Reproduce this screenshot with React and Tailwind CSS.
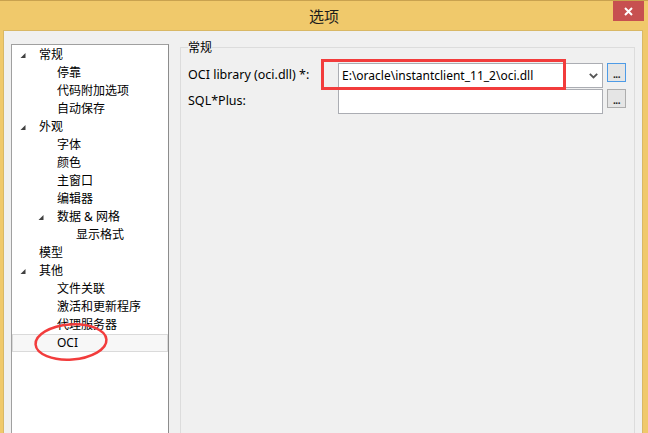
import React from "react";

const rows = [
  { t: "常规", l: 0, exp: true },
  { t: "停靠", l: 1 },
  { t: "代码附加选项", l: 1 },
  { t: "自动保存", l: 1 },
  { t: "外观", l: 0, exp: true },
  { t: "字体", l: 1 },
  { t: "颜色", l: 1 },
  { t: "主窗口", l: 1 },
  { t: "编辑器", l: 1 },
  { t: "数据 & 网格", l: 1, exp: true },
  { t: "显示格式", l: 2 },
  { t: "模型", l: 0 },
  { t: "其他", l: 0, exp: true },
  { t: "文件关联", l: 1 },
  { t: "激活和更新程序", l: 1 },
  { t: "代理服务器", l: 1 },
  { t: "OCI", l: 1, sel: true },
];

const padByLevel = ["pl-[8px]", "pl-[26px]", "pl-[45px]"];

function Tri() {
  return (
    <svg width="19" height="18" viewBox="0 0 19 18" className="shrink-0">
      <polygon points="5.5,8 5.5,13 0.5,13" transform="translate(0,-1)" fill="#404040" />
    </svg>
  );
}

function TreeRow({ r }) {
  return (
    <div
      className={
        "h-[18px] flex items-center whitespace-nowrap " +
        padByLevel[r.l] +
        (r.sel ? " bg-[#f7f7f7] outline outline-1 outline-[#dadada] -outline-offset-1" : "")
      }
    >
      {r.exp ? <Tri /> : <div className="w-[19px] shrink-0" />}
      <span className="text-[12px] leading-[18px] text-black">{r.t}</span>
    </div>
  );
}

function DotsButton({ focused }) {
  return (
    <div
      className={
        "ml-[4px] w-[19px] h-[19px] shrink-0 bg-[#e5e5e5] flex items-end justify-center pb-[4px] border " +
        (focused ? "border-[#4e9be6]" : "border-[#adadad]")
      }
    >
      <span className="text-[10px] leading-[6px] tracking-[-0.5px] text-[#222] font-bold">...</span>
    </div>
  );
}

export default function App() {
  return (
    <div
      className="w-[648px] h-[433px] overflow-hidden bg-[#f0c96b] flex flex-col relative border-t border-[#c9a24f]"
      style={{ fontFamily: '"Noto Sans", "Noto Sans CJK SC", sans-serif' }}
    >
      {/* title bar */}
      <div className="h-[29px] shrink-0 flex items-center justify-center relative">
        <span
          className="text-[15px] text-[#1b1b1b] leading-none"
          style={{ fontFamily: '"Noto Sans CJK SC", sans-serif' }}
        >
          选项
        </span>
        <div className="absolute right-[4px] top-0 w-[31px] h-[20px] bg-[#c75050] flex items-center justify-center">
          <svg width="9" height="9" viewBox="0 0 9 9">
            <path d="M1 1 L8 8 M8 1 L1 8" stroke="#fff" strokeWidth="2" />
          </svg>
        </div>
      </div>

      {/* content */}
      <div className="flex-1 ml-[3px] mr-[5px] border border-[#d9b865] bg-[#f0f0f0] flex items-start pl-[7px] pr-[7px] pt-[8px] gap-[11px]">
        {/* tree */}
        <div className="mt-[5px] pt-[1px] w-[158px] h-[420px] shrink-0 bg-white border border-[#a0a0a0] border-r-[#8c8c8c]">
          {rows.map((r, i) => (
            <TreeRow key={i} r={r} />
          ))}
        </div>

        {/* group box */}
        <fieldset className="flex-1 min-w-0 h-[420px] border border-[#dcdcdc] px-[7px] m-0">
          <legend className="text-[12px] leading-[17px] px-0 text-black">常规</legend>
          <div className="mt-[7px] flex items-start">
            <div className="w-[150px] shrink-0 h-[25px] flex items-center text-[12.5px] text-black whitespace-nowrap">
              OCI library (oci.dll) *:
            </div>
            <div className="w-[265px] h-[25px] shrink-0 border border-[#abadb3] bg-white flex items-center pl-[3px]">
              <span className="text-[12px] text-black whitespace-nowrap">
                {"E:\\oracle\\instantclient_11_2\\oci.dll"}
              </span>
              <svg width="9" height="6" viewBox="0 0 9 6" className="ml-auto mr-[4px]">
                <path d="M0.8 0.8 L4.5 4.5 L8.2 0.8" stroke="#555" strokeWidth="1.8" fill="none" />
              </svg>
            </div>
            <DotsButton focused />
          </div>
          <div className="mt-[1px] flex items-start">
            <div className="w-[150px] shrink-0 h-[25px] flex items-center text-[12.5px] text-black whitespace-nowrap">
              SQL*Plus:
            </div>
            <div className="w-[265px] h-[25px] shrink-0 border border-[#abadb3] bg-white" />
            <DotsButton />
          </div>
        </fieldset>
      </div>

      {/* annotations */}
      <div className="absolute left-[321px] top-[58px] w-[245px] h-[31px] border-[3px] border-[#f23c3c] pointer-events-none" />
      <svg className="absolute left-0 top-0 pointer-events-none" width="648" height="433">
        <ellipse
          cx="71"
          cy="341"
          rx="35.5"
          ry="17.5"
          transform="rotate(-4 71 341)"
          fill="none"
          stroke="#f23c3c"
          strokeWidth="2.5"
        />
      </svg>
    </div>
  );
}
